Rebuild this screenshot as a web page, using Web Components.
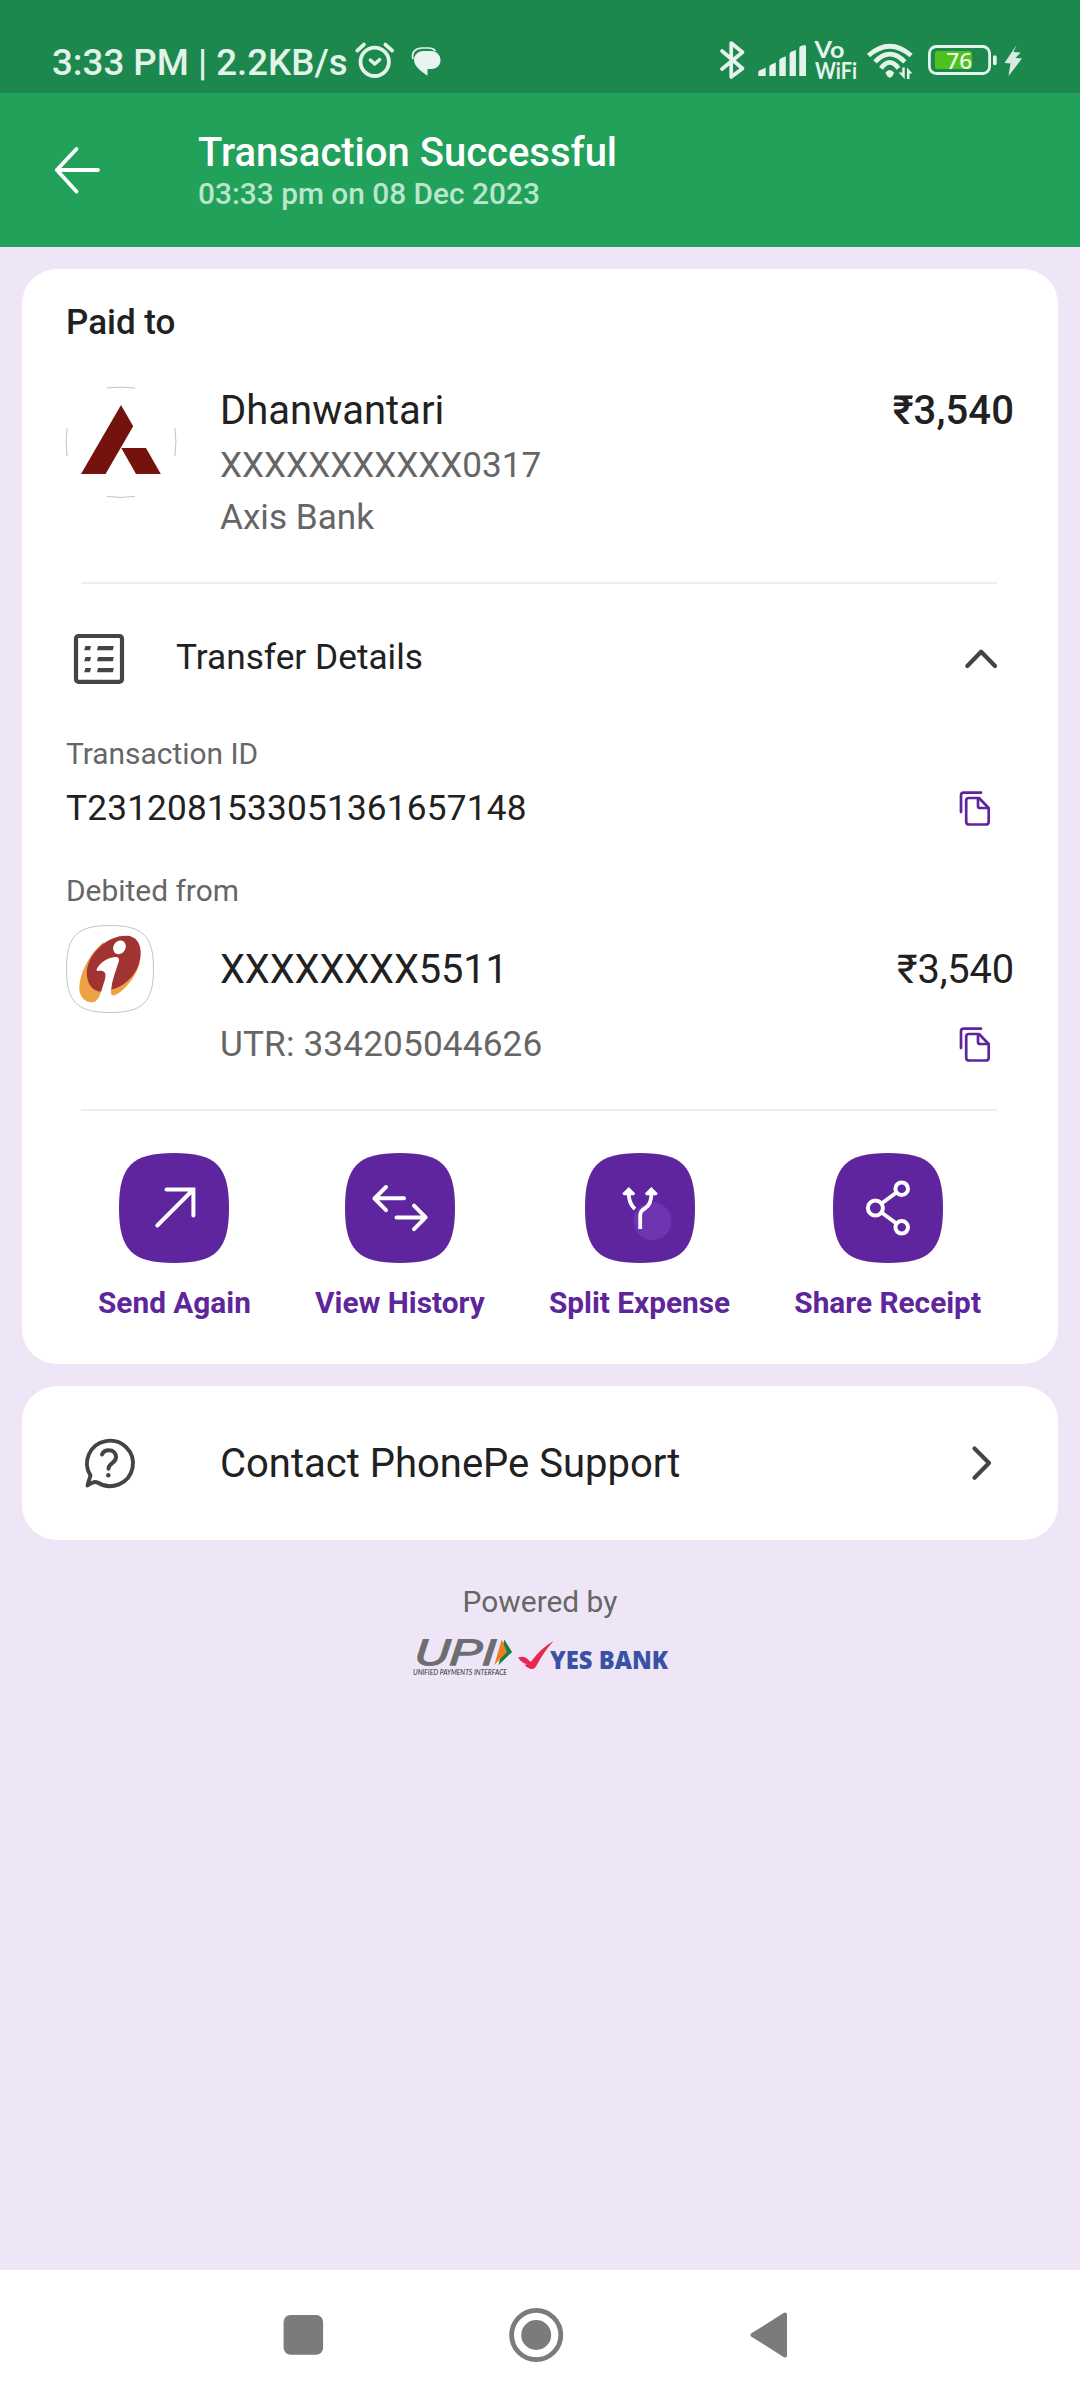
<!DOCTYPE html>
<html lang="en">
<head>
<meta charset="utf-8">
<title>Transaction Successful</title>
<style>
html,body{margin:0;padding:0;background:#eee6f7}
body{width:1080px;height:2400px;overflow:hidden;font-family:Roboto,"Noto Sans",sans-serif;color:#212121}
</style>
</head>
<body>
<payment-page></payment-page>
<script>
/* Icons share the page's own grid: each viewBox is the area that the icon covers. */
const ICONS = {
  alarm: ['354 40 42 40', `<g fill="none" stroke="#e2f3ea" stroke-linecap="round" stroke-linejoin="round"><circle cx="374.7" cy="61.8" r="14.2" stroke-width="3.8"/><path d="M370.3 60l4.4 4 5-4.4" stroke-width="3.4"/><path d="M357.3 50.6l6.6-6M392.2 50.6l-6.800-6" stroke-width="3.800"/></g>`],
  chat: ['411 46 31 31', `<path d="M413 59C411 52 416 48 422 48h7q4 0 6.500 3" fill="none" stroke="#e2f3ea" stroke-width="1.700"/><path d="M423 51h8.500c5 0 9 4 9 9.300s-4 8.700-8.500 8.700h-4.500v6.800C421 71 414 66.500 414 60c0-5 4-9 9-9z" fill="#e8f4ee"/>`],
  bluetooth: ['715 36 34 48', `<path d="M722 51l20.500 17.500L731.200 77V43l11.300 9.300L722 69" fill="none" stroke="#e4f4ec" stroke-width="3.700" stroke-linecap="round" stroke-linejoin="round"/>`],
  signal: ['757 36 50 48', `<g fill="#e4f4ec"><path d="M758.300 76v-3.500q0-1.500 1.500-2.300l5.900-2.400V76z"/><path d="M769.300 76V67q0-1.500 1.500-2.200l5-2.300V76z"/><path d="M779.300 76V60.500q0-1.500 1.500-2.300l5-2V76z"/><path d="M789.600 76V54q0-1.500 1.500-2.200l4.800-1.800V76z"/><path d="M799.300 76V48q0-1.300 1.500-2l3.700-1q1.500 0 1.500 1.500V76z"/></g>`],
  vowifi: ['814 36 45 48', `<text fill="#e4f4ec" font-family="Lato,sans-serif" font-weight="700"><tspan x="814.500" y="57.500" font-size="23" textLength="30" lengthAdjust="spacingAndGlyphs">Vo</tspan><tspan x="815" y="79" font-size="22" textLength="42" lengthAdjust="spacingAndGlyphs">WiFi</tspan></text>`],
  wifi: ['865 36 50 48', `<g fill="none" stroke="#e4f4ec" stroke-width="4.700"><path d="M868.500 55.500q21.200-18.500 42.600 0"/><path d="M875 61.800q14.700-15.500 29.800 0"/><path d="M881 68.300q8.700-11.700 17.500 0"/></g><path d="M885.500 72.500q4-5 8.600 0l-1.500 3.500-2.800 2-2.800-2z" fill="#e4f4ec"/><path d="M902.300 67.500h2.400v11.500l-6-6.500h3.600zM907 79V67.500l5.500 6h-3V79z" fill="#e4f4ec"/>`],
  battery: ['926 36 73 48', `<rect x="935" y="51" width="37" height="18" rx="2.500" fill="#4fc01c"/><rect x="929.400" y="46.500" width="60.200" height="27" rx="7" fill="none" stroke="#e4f4ec" stroke-width="2.800"/><rect x="993" y="55.300" width="3.700" height="10" rx="1.800" fill="#e4f4ec"/><text x="946.300" y="69" font-family="'Noto Sans',sans-serif" font-weight="500" font-size="22.500" fill="#e8f6ee" textLength="26" lengthAdjust="spacingAndGlyphs">76</text>`],
  bolt: ['1003 36 21 48', `<path d="M1016.500 45l-12 18 6 .5-2 12.500 13.500-17.500-6.500-.5 5-5.500-7-.5z" fill="#d5ecdf"/>`],
  back: ['53 145 48 50', `<path d="M98 170H57M76.500 149L56.800 170l19.700 21.500" fill="none" stroke="#fff" stroke-width="3.800" stroke-linecap="round" stroke-linejoin="round"/>`],
  axis: ['66 386 110 112', `<g fill="none" stroke="#c2c2c2" stroke-width="1"><path d="M107 388q14-1.800 28 0M107 496.500q14 1.800 28 0M67 428q-1.800 14 0 28M175 428q1.800 14 0 28"/></g><path d="M121 405l12.200 21.300L105.600 474H81z" fill="#74130d"/><path d="M121.300 448H146l14.800 26H136z" fill="#74130d"/>`],
  list: ['73 633 52 52', `<rect x="76" y="636" width="46" height="45.800" rx="2.500" fill="none" stroke="#444" stroke-width="4.200"/><path fill="#444" d="M85.500 646H91l-1 4.200h-5.900zM98 646h15.800l-1 4.200H97zM85.500 657H91l-1 4.200h-5.900zM98 657h15.800l-1 4.200H97zM85.500 668H91l-1 4.200h-5.900zM98 668h15.800l-1 4.200H97z"/>`],
  up: ['963 647 36 24', `<path d="M967.300 666l13.800-14.300L995 666" fill="none" stroke="#444" stroke-width="4.200" stroke-linecap="round" stroke-linejoin="round"/>`],
  right: ['969 1444 26 38', `<path d="M974.500 1448.500l14.500 14.600-14.500 14.600" fill="none" stroke="#444" stroke-width="4.200" stroke-linecap="round" stroke-linejoin="round"/>`],
  copy: ['958 790 34 37', `<g fill="none" stroke="#5f259f" stroke-width="2.700" stroke-linecap="round" stroke-linejoin="round"><path d="M961 812v-16.500q0-2.800 2.800-2.800H981"/><path d="M969 798h10l9.700 10v13.700q0 2.800-2.800 2.800H969q-2.800 0-2.800-2.800v-21q0-2.700 2.800-2.700z"/><path d="M978 799v7q0 2 2 2h8"/></g>`],
  icici: ['66 925 88 88', `<path d="M66.500 969C66.500 936 77 925.500 110 925.500S153.500 936 153.500 969s-10.500 43.500-43.500 43.500S66.500 1002 66.500 969z" fill="#fff" stroke="#c4c4c4"/><path d="M104 942C88 954 79 976 79.300 989c.4 10 8.700 14.500 14.700 13 4-1.500 7.200-8 7.700-14.500z" fill="#eea145"/><path d="M111 986l29-24c-3 14-17 31-26.500 33.500-3 0-3-4-2.500-9.500z" fill="#eea145"/><path d="M126 935.800c10.500 0 14.700 8 14.700 17.200-.2 20-16.700 34.500-29.700 36.500L101 991.500c-8.500 0-14.200-8-14.200-18.500 0-18 20-37.500 39.200-37.200z" fill="#a13433"/><ellipse cx="119.500" cy="947.300" rx="6" ry="7.200" transform="rotate(32 119.500 947.300)" fill="#fff"/><path d="M96.500 969.500c3.500-7 10.500-11.500 17-12.300 4-.5 6.200.5 5.300 4.300l-4 12q-3.200 9-3.800 17l-.5 9-8 4h-5.500q3.500-5 4.500-13l3.700-12c1-6.500-.7-8.200-8.200-7.500z" fill="#fff"/>`],
  send: ['119 1153 110 110', `<path d="M157.300 1225.500l36-36M166.500 1189.400h26.900v26" fill="none" stroke="#fff" stroke-width="4" stroke-linecap="round"/>`],
  history: ['345 1153 110 110', `<path d="M404 1198.300h-29.500M386 1187l-11.500 11.500 11.500 11.600M396.500 1217.400h29M414 1205.700l11.700 11.700-11.700 11.700" fill="none" stroke="#fff" stroke-width="4" stroke-linecap="round" stroke-linejoin="round"/>`],
  split: ['584 1153 110 110', `<circle cx="651.500" cy="1221.300" r="19" fill="#7034b2"/><path d="M627.800 1192q-.5 11 6.200 17M650.300 1192q.5 12-5.800 16-5.300 3-5.300 7v14" fill="none" stroke="#fff" stroke-width="3.800"/><path d="M627.800 1187l6.500 6.500-1.500 1.700h-10l-1.500-1.700zM650.300 1187l6.500 6.500-1.500 1.700h-10l-1.500-1.700z" fill="#fff"/>`],
  share: ['833 1153 110 110', `<g fill="none" stroke="#fff" stroke-width="4"><circle cx="901.700" cy="1188.700" r="6.300"/><circle cx="875.400" cy="1208" r="7.500"/><circle cx="901.700" cy="1227.300" r="6.300"/><path d="M881.500 1203.500l15-11M881.500 1212.500l15 11"/></g>`],
  support: ['84 1436 52 54', `<path d="M91.500 1475.500A23 22.700 0 1 1 98.500 1482.500Q95 1480.800 88.500 1485.500Q89 1483 91.500 1475.500z" fill="none" stroke="#444" stroke-width="3.900" stroke-linejoin="round"/><path d="M103 1454.500c1.500-3.500 4-4.200 6.700-4.200 4.500 0 7.300 2.800 7.300 7 0 6-7.500 5.700-7.500 11.500" fill="none" stroke="#444" stroke-width="4" stroke-linecap="round"/><circle cx="109.300" cy="1475.300" r="2.200" fill="#444"/>`],
  upi: ['412 1636 104 42', `<text transform="translate(414 1665) skewX(-4)" x="0" y="0" font-family="'Liberation Sans',sans-serif" font-style="italic" font-weight="400" font-size="37" fill="#6d6e71" stroke="#6d6e71" stroke-width="1.300" textLength="81" lengthAdjust="spacingAndGlyphs">UPI</text><path d="M504.300 1639.500l7.800 12.500-13.500 13z" fill="#0d8541"/><path d="M501.700 1639.500l5.300 12.500-12.700 13z" fill="#f47b22"/><text x="413" y="1674.600" font-family="Lato,sans-serif" font-style="italic" font-weight="400" font-size="7.300" fill="#2d2d32" textLength="94" lengthAdjust="spacingAndGlyphs">UNIFIED PAYMENTS INTERFACE</text>`],
  yes: ['516 1636 154 42', `<path d="M518 1657.500q6-2 9 1l3.700 3.500Q541 1648 553.500 1641q-10 11-17.500 25.500-2.500 3.500-6 2.200-3.500-1-5.500-4l3-.5q-6-1-9.500-6.700z" fill="#e9264d"/><text x="550" y="1669" font-family="'Open Sans','Noto Sans',sans-serif" font-weight="800" font-size="24.300" fill="#3a52a4" textLength="118" lengthAdjust="spacingAndGlyphs">YES BANK</text>`],
  recent: ['283 2314 41 42', `<rect x="283.600" y="2315" width="39.500" height="39.700" rx="7" fill="#7b7b7b"/>`],
  home: ['508 2307 56 56', `<circle cx="536.200" cy="2335" r="24.600" fill="none" stroke="#7b7b7b" stroke-width="4.800"/><circle cx="536.200" cy="2335" r="15" fill="#7b7b7b"/>`],
  prev: ['749 2310 39 50', `<path d="M785 2314.500v41L752.500 2335z" fill="#7b7b7b" stroke="#7b7b7b" stroke-width="4" stroke-linejoin="round"/>`]
};

const define = (name, css, html) => customElements.define(name, class extends HTMLElement {
  connectedCallback() {
    if (this.shadowRoot) return;
    const t = document.createElement('template');
    t.innerHTML = `<style>${css}</style>${html}`;
    this.attachShadow({mode: 'open'}).append(t.content.cloneNode(true));
  }
});

customElements.define('ui-icon', class extends HTMLElement {
  connectedCallback() {
    if (this.shadowRoot) return;
    const [box, body] = ICONS[this.getAttribute('name')];
    const [, , w, h] = box.split(' ');
    this.attachShadow({mode: 'open'}).innerHTML =
      `<style>:host{display:block;flex:none;width:${w}px;height:${h}px}svg{display:block;overflow:visible}</style>
       <svg width="${w}" height="${h}" viewBox="${box}">${body}</svg>`;
  }
});

define('status-bar', `
  :host{display:flex;justify-content:space-between;height:93px;background:#1d884d;color:#e2f3ea;padding:0 56px 0 52px;box-sizing:border-box}
  .l,.r{display:flex;align-items:flex-start}
  .l span{font:500 36.700px/44px Roboto,sans-serif;margin-top:41px;width:302px;white-space:nowrap}
  .l ui-icon:nth-of-type(1){margin-top:40px}
  .l ui-icon:nth-of-type(2){margin:46px 0 0 15px}
  .r{padding-top:36px}
  .r ui-icon[name=signal]{margin-left:8px}.r ui-icon[name=vowifi]{margin-left:7px}
  .r ui-icon[name=wifi]{margin-left:6px}.r ui-icon[name=battery]{margin-left:11px}
  .r ui-icon[name=bolt]{margin-left:4px}`,
  `<div class="l"><span>3:33 PM | 2.2KB/s</span><ui-icon name="alarm"></ui-icon><ui-icon name="chat"></ui-icon></div>
   <div class="r"><ui-icon name="bluetooth"></ui-icon><ui-icon name="signal"></ui-icon><ui-icon name="vowifi"></ui-icon><ui-icon name="wifi"></ui-icon><ui-icon name="battery"></ui-icon><ui-icon name="bolt"></ui-icon></div>`);

define('app-header', `
  :host{display:flex;height:154px;box-sizing:border-box;background:#22a15b;border-bottom:1px solid #2b9a60;padding:36px 53px 0}
  ui-icon{margin-top:16px}
  div{margin-left:97px;white-space:nowrap}
  .t{display:block;font-weight:500;font-size:40px;line-height:48px;color:#fff}
  .s{display:block;font-weight:500;font-size:29.850px;line-height:36px;margin-top:-1px;color:#b9e6cd}`,
  `<ui-icon name="back"></ui-icon><div><slot name="title" class="t"></slot><slot name="time" class="s"></slot></div>`);

define('surface-card', `
  :host{display:block;box-sizing:border-box;margin:0 22px;background:#fff;border-radius:35px}`, `<slot></slot>`);

define('thin-rule', `:host{display:block;height:2px;background:#eee;margin:0 17px 0 15px}`, ``);

define('payee-row', `
  :host{display:flex;height:152px;margin:43px 0 44px}
  ui-icon{margin-right:44px}
  .m{flex:1;margin-top:1px}.n,.a,.b,.p{display:block}
  .n{font-size:40px;line-height:48px}
  .a,.b{font-size:35.150px;line-height:42px;color:#666}
  .a{margin-top:9px}.b{margin-top:10px}
  .p{font-size:40px;line-height:48px;font-weight:500;margin-top:1px;letter-spacing:.1px}`,
  `<ui-icon name="axis"></ui-icon><div class="m"><slot class="n" name="name"></slot><slot class="a" name="account"></slot><slot class="b" name="bank"></slot></div><slot class="p" name="amount"></slot>`);

define('section-toggle', `
  :host{display:flex;height:50px;margin:50px 15px 0 7px;justify-content:space-between;align-items:flex-start;font-size:35.250px;line-height:42px}
  .l{display:flex;gap:51px}.l ui-icon{margin-top:-1px}span{margin-top:2px}.up{margin-top:13px}`,
  `<div class="l"><ui-icon name="list"></ui-icon><span><slot></slot></span></div><ui-icon class="up" name="up"></ui-icon>`);

define('field-label', `:host{display:block;font-size:29.900px;line-height:36px;color:#666}`, `<slot></slot>`);

define('copy-line', `
  :host{display:flex;justify-content:space-between;align-items:center;height:42px;padding-right:22px;font-size:35.200px;line-height:42px}`,
  `<span><slot></slot></span><ui-icon name="copy"></ui-icon>`);

define('account-row', `
  :host{display:flex;align-items:flex-start;height:88px;font-size:39.800px;line-height:48px}
  ui-icon{margin-right:66px}.n{flex:1;margin-top:21px;letter-spacing:-.1px}.p{margin-top:21px;letter-spacing:-.15px}`,
  `<ui-icon name="icici"></ui-icon><span class="n"><slot></slot></span><span class="p"><slot name="amount"></slot></span>`);

customElements.define('action-button', class extends HTMLElement {
  connectedCallback() {
    if (this.shadowRoot) return;
    this.attachShadow({mode: 'open'}).innerHTML = `<style>
      :host{display:flex;flex-direction:column;align-items:center;gap:22px;color:#5f259b;font-size:29.800px;line-height:36px;font-weight:700;white-space:nowrap}
      .tile{display:grid;width:110px;height:110px}
      .tile>*{grid-area:1/1}
      </style><div class="tile"><svg width="110" height="110" viewBox="0 0 110 110"><path d="M0 55C0 13 13 0 55 0S110 13 110 55 97 110 55 110 0 97 0 55z" fill="#5f259f"/></svg><ui-icon name="${this.getAttribute('icon')}"></ui-icon></div><span><slot></slot></span>`;
  }
});

define('action-row', `:host{display:flex;justify-content:space-between;margin:42px 33px 0 32px}`, `<slot></slot>`);

define('support-row', `
  :host{display:flex;align-items:center;height:154px;font-size:40px;line-height:48px;padding:0 63px 0 61px}
  span{flex:1;margin:2px 0 0 85px}`,
  `<ui-icon name="support"></ui-icon><span><slot></slot></span><ui-icon name="right"></ui-icon>`);

define('powered-by', `
  :host{display:block;margin-top:44px;text-align:center;font-size:29.900px;line-height:36px;color:#666}
  div{display:flex;justify-content:center;margin:16px 0 0 2px}`,
  `<slot></slot><div><ui-icon name="upi"></ui-icon><ui-icon name="yes"></ui-icon></div>`);

define('nav-bar', `
  :host{display:flex;align-items:center;height:130px;margin-top:auto;background:#fff;padding-left:283px;box-sizing:border-box}
  ui-icon[name=home]{margin-left:184px}ui-icon[name=prev]{margin-left:185px}`,
  `<ui-icon name="recent"></ui-icon><ui-icon name="home"></ui-icon><ui-icon name="prev"></ui-icon>`);

define('payment-page', `
  :host{display:flex;flex-direction:column;width:1080px;height:2400px;background:#eee6f7}
  .details{margin-top:22px;height:1094.500px;padding:33px 44px 0}
  .help{margin-top:22.500px}
  h2{margin:0 0 -1px;font-size:35px;line-height:42px;font-weight:500}
  .id{margin-top:15px;letter-spacing:.2px}.utr{margin:10px 0 44px 154px;color:#666;letter-spacing:.14px}`,
  `<status-bar></status-bar>
   <app-header><span slot="title">Transaction Successful</span><span slot="time">03:33 pm on 08 Dec 2023</span></app-header>
   <surface-card class="details">
     <h2>Paid to</h2>
     <payee-row><span slot="name">Dhanwantari</span><span slot="account">XXXXXXXXXXX0317</span><span slot="bank">Axis Bank</span><span slot="amount">₹3,540</span></payee-row>
     <thin-rule></thin-rule>
     <section-toggle>Transfer Details</section-toggle>
     <field-label style="margin-top:52px">Transaction ID</field-label>
     <copy-line class="id">T2312081533051361657148</copy-line>
     <field-label style="margin:44px 0 16px">Debited from</field-label>
     <account-row>XXXXXXXX5511<span slot="amount">₹3,540</span></account-row>
     <copy-line class="utr">UTR: 334205044626</copy-line>
     <thin-rule></thin-rule>
     <action-row>
       <action-button icon="send">Send Again</action-button>
       <action-button icon="history">View History</action-button>
       <action-button icon="split">Split Expense</action-button>
       <action-button icon="share">Share Receipt</action-button>
     </action-row>
   </surface-card>
   <surface-card class="help"><support-row>Contact PhonePe Support</support-row></surface-card>
   <powered-by>Powered by</powered-by>
   <nav-bar></nav-bar>`);
</script>
</body>
</html>
